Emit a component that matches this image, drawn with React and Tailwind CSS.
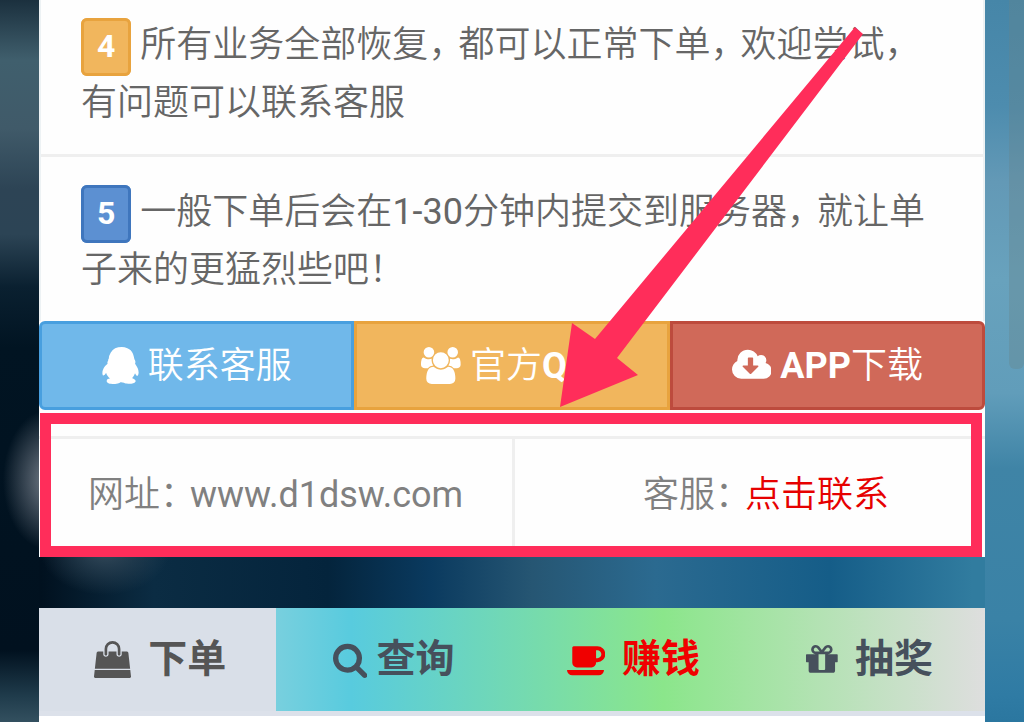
import React from "react";

const icons = {
    qq: {
        box: "0 0 1792 1792",
        d: "M270 806q-8-19-8-52 0-20 11-49t24-45q-1-22 7.5-53t22.5-43q0-139 92.5-288.5t217.5-209.5q139-66 324-66 133 0 266 55 49 21 90 48t71 56 55 68 42 74 32.5 84.5 25.5 89.5 22 98l1 5q55 83 55 150 0 14-9 40t-9 38q0 1 1.5 3.5t3.5 5 2 3.5q77 114 120.5 214.5t43.5 208.5q0 43-19.5 100t-55.5 57q-9 0-19.5-7.5t-19-17.5-19-26-16-26-13.5-26-9-17q-1-1-3-1l-5 4q-59 154-132 223 20 20 61.5 38.5t69 41.5 35.5 65q-2 4-4 16t-7 18q-64 97-302 97-53 0-110.5-9t-98-20-104.5-30q-15-5-23-7-14-4-46-4.5t-40-1.5q-41 45-127.5 65t-168.5 20q-35 0-69-1.5t-93-9-101-20.5-74.5-40-32.5-64q0-40 10-59.5t41-48.5q11-2 40.5-13t49.5-12q4 0 14-2 2-2 2-4l-2-3q-48-11-108-105.5t-73-156.5l-5-3q-4 0-12 20-18 41-54.5 74.5t-77.5 37.5h-1q-4 0-6-4.5t-5-5.5q-23-54-23-100 0-275 252-466z",
    },
    users: {
        box: "-64 0 1920 1792",
        d: "M529 896q-162 5-265 128h-134q-82 0-138-40.5t-56-118.5q0-353 124-353 6 0 43.5 21t97.5 42.5 119 21.5q67 0 133-23-5 37-5 66 0 139 81 256zm1071 637q0 120-73 189.5t-194 69.5h-874q-121 0-194-69.5t-73-189.5q0-53 3.5-103.5t14-109 26.5-108.5 43-97.5 62-81 85.5-53.5 111.5-20q10 0 43 21.5t73 48 107 48 135 21.5 135-21.5 107-48 73-48 43-21.5q61 0 111.5 20t85.5 53.5 62 81 43 97.5 26.5 108.5 14 109 3.5 103.5zm-1024-1277q0 106-75 181t-181 75-181-75-75-181 75-181 181-75 181 75 75 181zm704 384q0 159-112.5 271.5t-271.5 112.5-271.5-112.5-112.5-271.5 112.5-271.5 271.5-112.5 271.5 112.5 112.5 271.5zm576 225q0 78-56 118.5t-138 40.5h-134q-103-123-265-128 81-117 81-256 0-29-5-66 66 23 133 23 59 0 119-21.5t97.5-42.5 43.5-21q124 0 124 353zm-128-609q0 106-75 181t-181 75-181-75-75-181 75-181 181-75 181 75 75 181z",
    },
    download: {
        box: "0 0 1920 1792",
        d: "M1280 928q0-14-9-23t-23-9h-224v-352q0-13-9.5-22.5t-22.5-9.5h-192q-13 0-22.5 9.5t-9.5 22.5v352h-224q-13 0-22.5 9.5t-9.5 22.5q0 14 9 23l352 352q9 9 23 9t23-9l351-351q10-12 10-24zm640 224q0 159-112.5 271.5t-271.5 112.5h-1088q-185 0-316.5-131.5t-131.5-316.5q0-130 70-240t188-165q-2-30-2-43 0-212 150-362t362-150q156 0 285.5 87t188.5 231q71-62 166-62 106 0 181 75t75 181q0 76-41 138 130 31 213.5 135.5t83.5 238.5z",
    },
    bag: {
        box: "0 0 1792 1792",
        d: "M1757 1408l35 313q3 28-16 50-19 21-48 21h-1664q-29 0-48-21-19-22-16-50l35-313h1722zm-93-839l86 775h-1708l86-775q3-24 21-40.5t43-16.5h256v128q0 53 37.5 90.5t90.5 37.5 90.5-37.5 37.5-90.5v-128h384v128q0 53 37.5 90.5t90.5 37.5 90.5-37.5 37.5-90.5v-128h256q25 0 43 16.5t21 40.5zm-384-185v256q0 26-19 45t-45 19-45-19-19-45v-256q0-106-75-181t-181-75-181 75-75 181v256q0 26-19 45t-45 19-45-19-19-45v-256q0-159 112.5-271.5t271.5-112.5 271.5 112.5 112.5 271.5z",
    },
    search: {
        box: "64 0 1664 1792",
        d: "M1216 832q0-185-131.5-316.5t-316.5-131.5-316.5 131.5-131.5 316.5 131.5 316.5 316.5 131.5 316.5-131.5 131.5-316.5zm512 832q0 52-38 90t-90 38q-54 0-90-38l-343-342q-179 124-399 124-143 0-273.5-55.5t-225-150-150-225-55.5-273.5 55.5-273.5 150-225 225-150 273.5-55.5 273.5 55.5 225 150 150 225 55.5 273.5q0 220-124 399l343 343q37 37 37 90z",
    },
    coffee: {
        box: "0 0 1856 1792",
        d: "M1664 640q0-80-56-136t-136-56h-64v384h64q80 0 136-56t56-136zm-1664 768h1792q0 106-75 181t-181 75h-1280q-106 0-181-75t-75-181zm1856-768q0 159-112.5 271.5t-271.5 112.5h-64v32q0 92-66 158t-158 66h-704q-92 0-158-66t-66-158v-736q0-26 19-45t45-19h1152q159 0 271.5 112.5t112.5 271.5z",
    },
    gift: {
        box: "128 0 1536 1792",
        d: "M1056 1356v-716h-320v716q0 25 18 38.5t46 13.5h192q28 0 46-13.5t18-38.5zm-456-844h195l-126-161q-26-31-69-31-40 0-68 28t-28 68 28 68 68 28zm688-96q0-40-28-68t-68-28q-43 0-69 31l-125 161h194q40 0 68-28t28-68zm376 256v320q0 14-9 23t-23 9h-96v416q0 40-28 68t-68 28h-1088q-40 0-68-28t-28-68v-416h-96q-14 0-23-9t-9-23v-320q0-14 9-23t23-9h440q-93 0-158.5-65.5t-65.5-158.5 65.5-158.5 158.5-65.5q107 0 168 77l128 165 128-165q61-77 168-77 93 0 158.5 65.5t65.5 158.5-65.5 158.5-158.5 65.5h440q14 0 23 9t9 23z",
    },
};

const Icon = ({ name, className }) => (
    <svg viewBox={icons[name].box} fill="currentColor" aria-hidden="true" className={className}>
        <path d={icons[name].d} />
    </svg>
);

// Half-width form of full-width punctuation, with some room after it
const P = ({ children }) => <span className="mr-3 [font-feature-settings:'halt']">{children}</span>;

const Latin = ({ children }) => <span className="font-normal">{children}</span>;

const App = () => {
    return (
        <div className="relative min-h-screen overflow-hidden px-[39px] font-[Roboto,'Noto_Sans_CJK_SC',sans-serif] [background:radial-gradient(ellipse_45px_70px_at_48px_480px,#717a86,transparent),radial-gradient(ellipse_65px_45px_at_105px_550px,#33495a,transparent),linear-gradient(#1b303e,#405f6d_8%,#405a69_17%,#2d4455_25%,#2c4455_31%,#0a2030_38%,#011422_46%,#01111f_86%,#1f3b4b_92%,#4d6b79)_left/39px_100%_no-repeat,linear-gradient(#4686a8,#4d8cae_14%,#6399b6_24%,#68a2bd_37%,#619dba_52%,#3f84a6_62%,#3a82a6_82%,#2f7ba4_92%,#25719a)_right/39px_100%_no-repeat,linear-gradient(90deg,#01111f_4%,#0b2c43_15%,#04243c_32%,#0a3a5f_42%,#265673_52%,#2b6a90_64%,#155d88_81%,#317c9f_95%)]">
            {/* Notice card */}
            <div className="relative bg-[#fefefe]">
                <ul className="border-x-2 border-[#edf2f4] text-[36px] leading-[57px] font-[350] text-[#666]">
                    <li className="border-b-[3px] border-[#efefef] px-10 pt-[17px] pb-[22px]">
                        <span className="mr-[9px] rounded-md border-[3px] border-[#e8a33e] bg-[#f1b65d] px-[13px] pt-1.5 pb-2 text-[32px] font-bold text-white">4</span>
                        所有业务全部恢复<P>，</P>都可以正常下单<P>，</P>欢迎尝试<P>，</P>有问题可以联系客服
                    </li>
                    <li className="px-10 pt-[27px] pb-[22px]">
                        <span className="mr-[9px] rounded-md border-[3px] border-[#3f76bd] bg-[#5c90d2] px-[13px] pt-1.5 pb-2 text-[32px] font-bold text-white">5</span>
                        一般下单后会在<Latin>1-30</Latin>分钟内提交到服务器<P>，</P>就让单子来的更猛烈些吧<P>！</P>
                    </li>
                </ul>

                <div className="grid h-[89px] grid-cols-3 text-[36px] font-[350] text-white">
                    <button className="flex items-center justify-center gap-[9px] rounded-l-md border-[3px] border-[#489fdf] bg-[#70b8ea]">
                        <Icon name="qq" className="h-[37px]" />
                        联系客服
                    </button>
                    <button className="flex items-center justify-center gap-[9px] border-[3px] border-[#e8a33e] bg-[#f1b65d]">
                        <Icon name="users" className="h-[37px]" />
                        <span>官方<b className="font-bold">Q</b>群</span>
                    </button>
                    <button className="flex items-center justify-center gap-[9px] rounded-r-md border-[3px] border-[#bd4b3d] bg-[#d06959]">
                        <Icon name="download" className="h-[37px]" />
                        <span><b className="font-bold">APP</b>下载</span>
                    </button>
                </div>

                {/* Contact row with highlight frame */}
                <div className="relative pt-[26px]">
                    <div className="grid h-[121px] grid-cols-2 border-t-[3px] border-[#efefef] text-[36px] font-[350] text-[#808080]">
                        <div className="flex items-center justify-center pb-1.5">
                            <span>网址<P>：</P><Latin>www.d1dsw.com</Latin></span>
                        </div>
                        <div className="flex items-center justify-center border-l-[3px] border-[#efefef] pb-1.5 pl-8">
                            <span>客服<P>：</P><a href="#kefu" className="text-[#e60000]">点击联系</a></span>
                        </div>
                    </div>
                    <div className="pointer-events-none absolute top-[3px] right-[3px] bottom-0 left-px border-[11px] border-[#ff2d5a]"></div>
                </div>

                <svg viewBox="0 0 304 380" fill="#ff2d5a" aria-hidden="true" className="pointer-events-none absolute top-[27px] left-[521px] w-[304px]">
                    <path d="M295 0 303 7 57 331 78 348 0 380 12 296 35 312Z" />
                </svg>
            </div>

            {/* Tabs */}
            <div className="mt-[51px] bg-white pb-10">
                <nav className="grid h-[108px] grid-cols-4 border-b-[5px] border-[#dce1ea] bg-[linear-gradient(90deg,#dedede,#58cbde_33%,#8be68b_66%,#dedede)] text-[39px] font-bold text-[#46505c]">
                    <a href="#order" className="flex items-center justify-center gap-[17px] bg-[#d9dfe8] pl-1.5 text-[#555]">
                        <Icon name="bag" className="h-[37px]" />
                        下单
                    </a>
                    <a href="#query" className="flex items-center justify-center gap-[9px]">
                        <Icon name="search" className="h-[37px]" />
                        查询
                    </a>
                    <a href="#earn" className="flex items-center justify-center gap-[17px] pl-1.5 text-[#f00000]">
                        <Icon name="coffee" className="h-[37px]" />
                        赚钱
                    </a>
                    <a href="#lottery" className="flex items-center justify-center gap-[17px] pl-1.5">
                        <Icon name="gift" className="h-[37px]" />
                        抽奖
                    </a>
                </nav>
            </div>

            {/* Scroll thumb */}
            <div className="absolute top-0 right-0 h-[369px] w-[15px] rounded-b-md bg-[#66838a]/35"></div>
        </div>
    );
};

export default App;
